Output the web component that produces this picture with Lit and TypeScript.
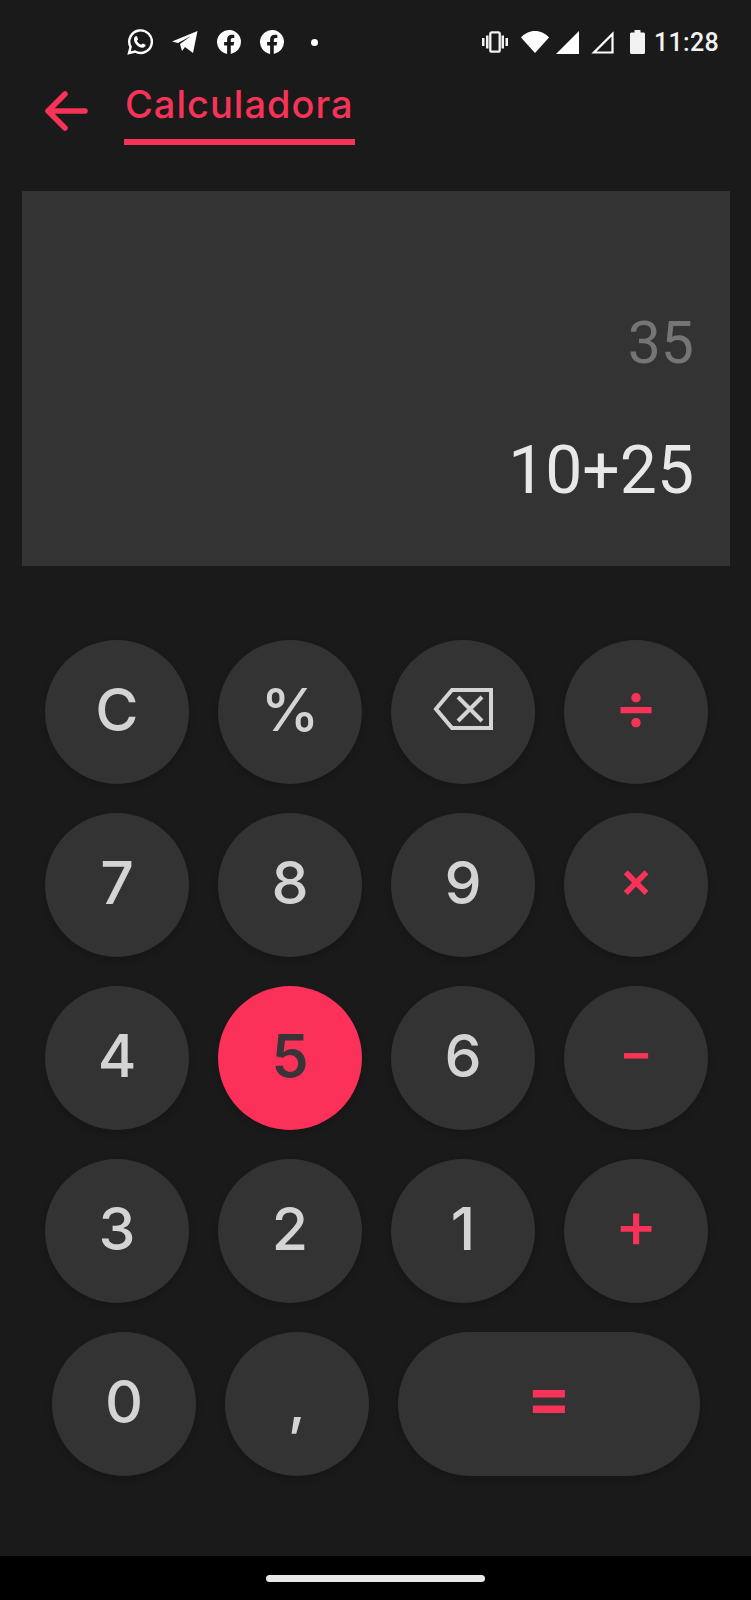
import { LitElement, html, css, svg } from 'lit';
import { customElement } from 'lit/decorators.js';

const keys = [
  [['C', ''], ['%', ''], ['back', ''], ['÷', 'op div']],
  [['7', ''], ['8', ''], ['9', ''], ['×', 'op']],
  [['4', ''], ['5', 'active'], ['6', ''], ['−', 'op']],
  [['3', ''], ['2', ''], ['1', ''], ['+', 'op plus']],
];

const fbIcon = svg`<svg width="24" height="24" viewBox="0 0 24 24"><path fill="#fff" d="M24 12a12 12 0 1 0-13.9 11.9v-8.400H7.100V12h3V9.400c0-3 1.800-4.700 4.500-4.700 1.300 0 2.700.2 2.700.2v3h-1.500c-1.500 0-2 .9-2 1.900V12h3.300l-.5 3.500h-2.800v8.400A12 12 0 0 0 24 12z"/></svg>`;

@customElement('app-root')
export class AppRoot extends LitElement {
  static styles = css`
    :host {
      display: block;
      width: 751px;
      height: 1600px;
      background: #1a1a1a;
      font-family: Inter, sans-serif;
      overflow: hidden;
    }

    .status {
      height: 84px;
      display: flex;
      align-items: center;
      justify-content: space-between;
      padding: 0 32px 0 127px;
      box-sizing: border-box;
    }

    .status-left, .status-right {
      display: flex;
      align-items: center;
    }

    .status-left { gap: 19px; }

    .dot {
      width: 7px;
      height: 7px;
      border-radius: 50%;
      background: #fff;
      margin-left: 8px;
    }

    .vibrate { margin-right: 13px; }
    .wifi { margin-right: 7px; }
    .signal { margin-right: 12px; }
    .signal-empty { margin-right: 16px; }
    .battery { margin-right: 9px; }

    .clock {
      font-family: Roboto, sans-serif;
      font-size: 25px;
      font-weight: 500;
      color: #f2f2f2;
      letter-spacing: 0.3px;
    }

    .header {
      height: 107px;
      display: flex;
      align-items: flex-start;
      padding-left: 44px;
    }

    .back { margin-top: 7px; }

    .title {
      margin-left: 36px;
      color: #f83358;
      font-size: 38px;
      font-weight: 500;
      line-height: 40px;
      height: 55px;
      padding: 0 1px;
      border-bottom: 6px solid #f83358;
      letter-spacing: 1px;
      box-sizing: content-box;
    }

    .display {
      margin: 0 21px 0 22px;
      height: 375px;
      background: #333333;
      padding-right: 36px;
      display: flex;
      flex-direction: column;
      align-items: flex-end;
      font-family: Roboto, sans-serif;
    }

    .result {
      margin-top: 117px;
      font-size: 59px;
      line-height: 70px;
      color: #757575;
    }

    .expr {
      margin-top: 54px;
      font-size: 66px;
      line-height: 78px;
      color: #e8e8e8;
    }

    .pad {
      margin-top: 74px;
      display: flex;
      flex-direction: column;
      gap: 29px;
      height: 916px;
      box-sizing: border-box;
    }

    .row {
      display: flex;
      gap: 29px;
      padding-left: 45px;
    }

    .row.last { padding-left: 52px; }

    .key {
      width: 144px;
      height: 144px;
      border-radius: 72px;
      background: #333333;
      color: #d4d4d4;
      font-size: 59px;
      font-weight: 500;
      display: flex;
      align-items: center;
      justify-content: center;
      padding-bottom: 5px;
      box-sizing: border-box;
      box-shadow: 0 3px 6px rgba(0, 0, 0, 0.18);
    }

    .key.op {
      color: #f83358;
      font-size: 50px;
      font-weight: 600;
      padding-bottom: 13px;
    }
    .key.div { font-size: 66px; font-weight: 500; padding-bottom: 14px; }
    .key.plus { font-size: 64px; font-weight: 500; padding-bottom: 16px; }
    .key.equals { font-size: 68px; padding-bottom: 16px; }
    .key.active { background: #fb3159; color: #3a3338; font-weight: 600; }
    .key.wide { width: 302px; }

    .key svg { margin-top: -1px; }

    .nav {
      height: 25px;
      background: #000;
      display: flex;
      justify-content: center;
      padding-top: 19px;
    }

    .handle {
      width: 219px;
      height: 7px;
      border-radius: 4px;
      background: #e8e8e8;
    }
  `;

  renderKey(label: string, kind: string) {
    if (label == 'back') {
      return html`<div class="key">
        <svg width="60" height="44" viewBox="0 0 60 44" fill="none" stroke="#d4d4d4" stroke-width="4">
          <path d="M58 3H19L3 22l16 19h39z"/>
          <path d="M25 10l24 24M49 10L25 34"/>
        </svg>
      </div>`;
    }
    return html`<div class="key ${kind}">${label}</div>`;
  }

  render() {
    return html`
      <div class="status">
        <div class="status-left">
          <svg width="26" height="26" viewBox="0 0 26 26" fill="none">
            <path stroke="#fff" stroke-width="2.400" d="M2 24l1.600-6A11.300 11.300 0 1 1 8 22.500z"/>
            <path fill="#fff" d="M9.500 7c.6 0 1.200 2.500 1.500 3 .2.600-1 1.500-1 2 .9 1.800 2.200 3 4 3.800.500 0 1.300-1.400 1.900-1.300l2.600 1.300c.3 1.600-1.200 3-3 3-4 0-8.500-4.500-8.500-8.300C7 8.500 8 7 9.500 7z"/>
          </svg>
          <svg width="26" height="24" viewBox="0 0 26 24"><path fill="#fff" d="M0 11.500L25.500 1 21 23l-8-6-3 4-2-7L19 6 6 13z"/></svg>
          ${fbIcon}${fbIcon}
          <div class="dot"></div>
        </div>
        <div class="status-right">
          <svg class="vibrate" width="26" height="22" viewBox="0 0 26 22" fill="#f2f2f2">
            <rect x="0" y="7" width="2.500" height="8"/><rect x="4" y="4.500" width="2.500" height="13"/>
            <rect x="19.500" y="4.500" width="2.500" height="13"/><rect x="23.500" y="7" width="2.500" height="8"/>
            <rect x="8.300" y="1.300" width="9.400" height="19.400" rx="1.500" fill="none" stroke="#f2f2f2" stroke-width="2.300"/>
          </svg>
          <svg class="wifi" width="28" height="22" viewBox="0 0 28 22"><path fill="#fff" d="M14 22L0 6.500C3.500 2.500 8.500 0 14 0s10.500 2.500 14 6.500z"/></svg>
          <svg class="signal" width="23" height="23" viewBox="0 0 23 23"><path fill="#fff" d="M23 0v23H0z"/></svg>
          <svg class="signal-empty" width="23" height="23" viewBox="0 0 23 23"><path fill="none" stroke="#fff" stroke-width="2.200" d="M21.500 3v18.500H3z"/></svg>
          <svg class="battery" width="15" height="24" viewBox="0 0 15 24"><path fill="#f2f2f2" d="M4.500 0h6v2.500h3c.8 0 1.500.7 1.500 1.500v18.500c0 .8-.7 1.500-1.500 1.500h-12C.7 24 0 23.300 0 22.500V4c0-.8.7-1.500 1.500-1.500h3z"/></svg>
          <span class="clock">11:28</span>
        </div>
      </div>
      <div class="header">
        <svg class="back" width="44" height="40" viewBox="0 0 44 40" fill="none" stroke="#f83358" stroke-width="5.500" stroke-linecap="round" stroke-linejoin="round">
          <path d="M41 20H4M21 3L4 20l17 17"/>
        </svg>
        <div class="title">Calculadora</div>
      </div>
      <div class="display">
        <div class="result">35</div>
        <div class="expr">10+25</div>
      </div>
      <div class="pad">
        ${keys.map(row => html`<div class="row">${row.map(k => this.renderKey(k[0], k[1]))}</div>`)}
        <div class="row last">
          <div class="key">0</div>
          <div class="key">,</div>
          <div class="key op wide equals">=</div>
        </div>
      </div>
      <div class="nav"><div class="handle"></div></div>
    `;
  }
}
